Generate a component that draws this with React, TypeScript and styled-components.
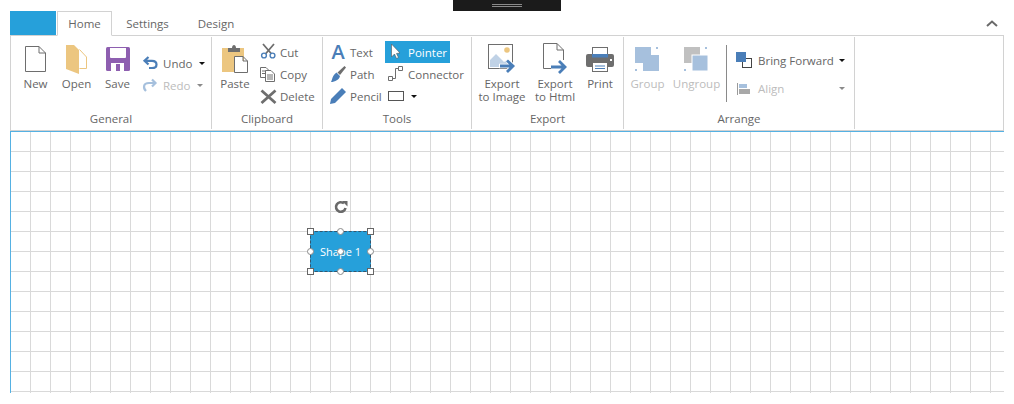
import React from "react";
import styled, { createGlobalStyle } from "styled-components";

const Global = createGlobalStyle`
  html, body { margin: 0; padding: 0; background: #fff; overflow: hidden; }
  body { font-family: "Open Sans", "Liberation Sans", sans-serif; font-size: 11.5px; color: #6b6b6b; }
`;

const Page = styled.div`
  position: relative;
  width: 1014px;
  height: 404px;
  padding: 11px 0 0 10px;
  box-sizing: border-box;
`;
const DragHandle = styled.div`
  position: absolute;
  left: 453px;
  top: 0;
  width: 108px;
  height: 11px;
  background: #1b1b1b;
  display: flex;
  justify-content: center;
  padding: 4px 0 0 0;
  box-sizing: border-box;
  &::before {
    content: "";
    width: 30px;
    height: 3px;
    border-top: 1px solid #8a8a8a;
    border-bottom: 1px solid #8a8a8a;
    box-sizing: border-box;
  }
`;
const TabRow = styled.div`
  height: 24px;
  width: 994px;
  display: flex;
  align-items: stretch;
  position: relative;
`;
const AppButton = styled.div`
  width: 46px;
  margin-right: 1px;
  background: #26a0da;
`;
const Tab = styled.div<{ $active?: boolean; $width: number }>`
  width: ${(p) => p.$width}px;
  box-sizing: border-box;
  margin-bottom: ${(p) => (p.$active ? "-1px" : "0")};
  background: #fff;
  display: flex;
  align-items: center;
  justify-content: center;
  font-size: 11.5px;
  color: #666;
  position: relative;
  z-index: 1;
  border: 1px solid ${(p) => (p.$active ? "#d2d2d2" : "transparent")};
  border-bottom: ${(p) => (p.$active ? "1px solid #fff" : "none")};
`;
const Collapse = styled.svg`
  margin-left: auto;
  margin-right: 6px;
  align-self: center;
`;
const Ribbon = styled.div`
  width: 994px;
  height: 96px;
  box-sizing: border-box;
  border: 1px solid #d2d2d2;
  display: flex;
  background: #fff;
`;
const Group = styled.section<{ $width: number }>`
  width: ${(p) => p.$width}px;
  box-sizing: border-box;
  margin: 1px 0;
  border-right: 1px solid #d2d2d2;
  display: flex;
  flex-direction: column;
  flex: none;
`;
const GroupBody = styled.div<{ $pad?: number }>`
  flex: 1;
  display: flex;
  align-items: flex-start;
  padding-left: ${(p) => p.$pad ?? 0}px;
`;
const GroupTitle = styled.div`
  height: 21px;
  line-height: 22px;
  text-align: center;
  color: #666;
`;
const LargeButton = styled.div<{ $width: number; $disabled?: boolean }>`
  width: ${(p) => p.$width}px;
  flex: none;
  padding-top: 7px;
  display: flex;
  flex-direction: column;
  align-items: center;
  color: ${(p) => (p.$disabled ? "#bcbcbc" : "#666")};
`;
const LargeIcon = styled.svg`
  display: block;
  overflow: visible;
`;
const LargeLabel = styled.div`
  margin-top: 3px;
  line-height: 13px;
  text-align: center;
  white-space: nowrap;
`;
const SmallColumn = styled.div<{ $top: number; $width?: number }>`
  padding-top: ${(p) => p.$top}px;
  width: ${(p) => (p.$width ? p.$width + "px" : "auto")};
  flex: none;
  display: flex;
  flex-direction: column;
`;
const SmallRow = styled.div<{ $h?: number; $indent: number; $active?: boolean; $disabled?: boolean; $width?: number }>`
  height: ${(p) => p.$h ?? 22}px;
  padding-left: ${(p) => p.$indent}px;
  width: ${(p) => (p.$width ? p.$width + "px" : "auto")};
  box-sizing: border-box;
  display: flex;
  align-items: center;
  gap: 4px;
  white-space: nowrap;
  background: ${(p) => (p.$active ? "#26a0da" : "transparent")};
  color: ${(p) => (p.$active ? "#fff" : p.$disabled ? "#bcbcbc" : "#666")};
`;
const IconSlot = styled.svg<{ $w?: number }>`
  width: ${(p) => p.$w ?? 16}px;
  height: 18px;
  flex: none;
  overflow: visible;
`;
const LetterIcon = styled.span`
  width: 16px;
  flex: none;
  text-align: center;
  font-size: 20px;
  font-weight: 600;
  line-height: 18px;
  color: #4a7eb8;
`;
const DropArrow = styled.span<{ $disabled?: boolean; $right?: number; $auto?: boolean }>`
  width: 0;
  height: 0;
  margin-left: ${(p) => (p.$auto ? "auto" : "3px")};
  margin-right: ${(p) => p.$right ?? 0}px;
  border-left: 3px solid transparent;
  border-right: 3px solid transparent;
  border-top: 3px solid ${(p) => (p.$disabled ? "#8a8a8a" : "#111")};
`;
const Divider = styled.div`
  width: 1px;
  height: 57px;
  margin: 8px 0 0 4px;
  background: #8a8a8a;
  flex: none;
`;
const Canvas = styled.div`
  position: relative;
  width: 994px;
  height: 262px;
  box-sizing: border-box;
  border-top: 1px solid #55b1e3;
  border-left: 1px solid #55b1e3;
  background-color: #fff;
  background-image: linear-gradient(to right, transparent 19px, #d9d9d9 19px),
    linear-gradient(to bottom, transparent 19px, #d9d9d9 19px);
  background-size: 20px 20px;
`;
const Shape = styled.div`
  position: absolute;
  left: 299px;
  top: 99px;
  width: 61px;
  height: 41px;
  box-sizing: border-box;
  background: #26a0da;
  border: 1px dashed #34566e;
  color: #fff;
  font-size: 11px;
  display: flex;
  align-items: center;
  justify-content: center;
`;
const Handle = styled.span<{ $x: number; $y: number }>`
  position: absolute;
  left: ${(p) => p.$x}px;
  top: ${(p) => p.$y}px;
  width: 7px;
  height: 7px;
  box-sizing: border-box;
  background: #fff;
  border: 1px solid #666;
`;
const Knob = styled(Handle)`
  border-radius: 50%;
  border-color: #8a8a8a;
`;
const RotateIcon = styled.svg`
  position: absolute;
  left: 323px;
  top: 68px;
`;

const BLUE = "#4a7eb8";
const LBLUE = "#a6c0dd";
const TAN = "#ecc680";
const GRAY = "#6e6e6e";

const box = (x: number, w: number) => ({ width: w, height: 30, viewBox: `${x} 44 ${w} 30` });
const slot = (x: number, cy: number, w = 16) => ({ $w: w, viewBox: `${x} ${cy - 9} ${w} 18` });

export default function App() {
  return (
    <Page>
      <Global />
      <DragHandle />
      <TabRow>
        <AppButton />
        <Tab $active $width={55}>Home</Tab>
        <Tab $width={71}>Settings</Tab>
        <Tab $width={66}>Design</Tab>
        <Collapse width="12" height="7" viewBox="0 0 12 7">
          <path d="M1 6 L6 1.5 L11 6" fill="none" stroke="#6a6a6a" strokeWidth="2" />
        </Collapse>
      </TabRow>
      <Ribbon>
        <Group $width={201}>
          <GroupBody $pad={4}>
            <LargeButton $width={41}>
              <LargeIcon {...box(24, 22)}>
                <path d="M24.5 46.5 H38 L44.5 53 V71.5 H24.5 Z M38 46.5 V53 H44.5" fill="#fff" stroke={GRAY} />
              </LargeIcon>
              <LargeLabel>New</LargeLabel>
            </LargeButton>
            <LargeButton $width={41}>
              <LargeIcon {...box(65, 22)}>
                <path d="M78.5 49.5 L85.5 57 V68.5 H78.5" fill="#fff" stroke={TAN} />
                <path d="M65 45 L73 45 L78 50 V74 L65 69 Z" fill={TAN} />
              </LargeIcon>
              <LargeLabel>Open</LargeLabel>
            </LargeButton>
            <LargeButton $width={41}>
              <LargeIcon {...box(105, 24)}>
                <rect x="105" y="47" width="24" height="24" rx="1.5" fill="#8e5fb0" />
                <path d="M109 48 H125 V57 Q125 58 124 58 H110 Q109 58 109 57 Z" fill="#fff" />
                <path d="M110 63 H123 V71 H110 Z" fill="#fff" />
                <path d="M115 64 H119 V71 H115 Z" fill="#8e5fb0" />
              </LargeIcon>
              <LargeLabel>Save</LargeLabel>
            </LargeButton>
            <SmallColumn $top={15}>
              <SmallRow $indent={5} $width={67}>
                <IconSlot {...slot(143, 63)}>
                  <path d="M148.5 57 L144.5 60.8 L148.5 64.5 M145 60.8 H152 C158 60.8 158 68 152 68 H149" fill="none" stroke={BLUE} strokeWidth="2.2" />
                </IconSlot>
                Undo
                <DropArrow $auto />
              </SmallRow>
              <SmallRow $indent={5} $width={67} $disabled>
                <IconSlot {...slot(143, 85)}>
                  <path d="M152 79.5 L155.5 83 L152 86.5 M155 83 H149 C143 83 143 88 146 91" fill="none" stroke={LBLUE} strokeWidth="2.2" />
                </IconSlot>
                Redo
                <DropArrow $auto $disabled $right={2} />
              </SmallRow>
            </SmallColumn>
          </GroupBody>
          <GroupTitle>General</GroupTitle>
        </Group>

        <Group $width={111}>
          <GroupBody>
            <LargeButton $width={46}>
              <LargeIcon {...box(222, 26)}>
                <path d="M222 48 H244 V72 H222 Z" fill={TAN} />
                <path d="M228 48 H232 C232 44 236 44 236 48 H240 V52 H228 Z" fill={GRAY} />
                <path d="M234.5 56.5 H243 L247.5 61 V72.5 H234.5 Z M243 56.5 V61 H247.5" fill="#fff" stroke={GRAY} />
              </LargeIcon>
              <LargeLabel>Paste</LargeLabel>
            </LargeButton>
            <SmallColumn $top={4}>
              <SmallRow $indent={2}>
                <IconSlot {...slot(260, 52)}>
                  <path d="M263 44 L272 54.5 M274 44 L265 54.5" stroke={GRAY} strokeWidth="1.8" fill="none" />
                  <circle cx="264" cy="55.5" r="2.4" fill="#fff" stroke={BLUE} strokeWidth="1.4" />
                  <circle cx="272.5" cy="55.5" r="2.4" fill="#fff" stroke={BLUE} strokeWidth="1.4" />
                </IconSlot>
                Cut
              </SmallRow>
              <SmallRow $indent={2}>
                <IconSlot {...slot(260, 74)}>
                  <path d="M260.5 67.5 H266 L268.5 70 V77.5 H260.5 Z M262 71 H266 M262 73.5 H266" fill="#fff" stroke={GRAY} />
                  <path d="M265.5 70.5 H271 L274.5 74 V81.5 H265.5 Z M267 75 H273 M267 77 H273 M267 79 H273" fill="#fff" stroke={GRAY} />
                </IconSlot>
                Copy
              </SmallRow>
              <SmallRow $indent={2}>
                <IconSlot {...slot(260, 96)}>
                  <path d="M261.5 90.5 L275.5 103 M275.5 90.5 L261.5 103" stroke={GRAY} strokeWidth="2.8" fill="none" />
                </IconSlot>
                Delete
              </SmallRow>
            </SmallColumn>
          </GroupBody>
          <GroupTitle>Clipboard</GroupTitle>
        </Group>

        <Group $width={149}>
          <GroupBody>
            <SmallColumn $top={4} $width={62}>
              <SmallRow $indent={7}>
                <LetterIcon>A</LetterIcon>
                Text
              </SmallRow>
              <SmallRow $indent={7}>
                <IconSlot {...slot(330, 74)}>
                  <path d="M344.5 66 L346 67.5 L340 75 L337.5 72.5 Z" fill={GRAY} />
                  <path d="M336.5 72.5 L340 76 C339.5 79.5 335 82 331 82 C332.5 79.5 332 75.5 336.5 72.5 Z" fill={BLUE} />
                </IconSlot>
                Path
              </SmallRow>
              <SmallRow $indent={7}>
                <IconSlot {...slot(330, 96)}>
                  <path d="M342 88 L346 92 L335 103 L330 104 L331 99 Z" fill={BLUE} />
                </IconSlot>
                Pencil
              </SmallRow>
            </SmallColumn>
            <SmallColumn $top={4}>
              <SmallRow $indent={3} $active $width={65}>
                <IconSlot {...slot(388, 52)}>
                  <path d="M391.5 44 V57 L394.5 54 L396.5 58.5 L398.5 57.5 L396.5 53.5 L400 53 Z" fill="#fff" stroke="#555" strokeWidth="0.6" />
                </IconSlot>
                Pointer
              </SmallRow>
              <SmallRow $indent={3}>
                <IconSlot {...slot(388, 74)}>
                  <path d="M388.5 76.5 H392.5 V80.5 H388.5 Z M398.5 66.5 H402.5 V70.5 H398.5 Z" fill="#fff" stroke={GRAY} />
                  <path d="M392.5 78.5 H395.5 V68.5 H398.5" fill="none" stroke={GRAY} />
                </IconSlot>
                Connector
              </SmallRow>
              <SmallRow $indent={3}>
                <IconSlot {...slot(388, 96)}>
                  <rect x="388.5" y="91.5" width="15" height="9" fill="#fff" stroke="#555" />
                </IconSlot>
                <DropArrow />
              </SmallRow>
            </SmallColumn>
          </GroupBody>
          <GroupTitle>Tools</GroupTitle>
        </Group>

        <Group $width={152}>
          <GroupBody>
            <LargeButton $width={60}>
              <LargeIcon {...box(489, 29)}>
                <rect x="489.5" y="44.5" width="24" height="24" fill="#fff" stroke={GRAY} />
                <circle cx="508" cy="50" r="2.8" fill={TAN} />
                <path d="M491 65 V60 L497 54 L505 62 L508 60 L511 63 V67 H491 Z" fill="#c0d2e6" />
                <path d="M500 66 H512 M508 60 L514 66 L508 72" fill="none" stroke="#fff" strokeWidth="4.5" />
                <path d="M501 66 H512 M508 60.5 L514 66 L508 72" fill="none" stroke={BLUE} strokeWidth="2.8" />
              </LargeIcon>
              <LargeLabel>Export<br />to Image</LargeLabel>
            </LargeButton>
            <LargeButton $width={46}>
              <LargeIcon {...box(543, 25)}>
                <path d="M551 68.5 H543.5 V43.5 H557 L563.5 50 V60 M557 43.5 V50 H563.5" fill="#fff" stroke={GRAY} />
                <path d="M551 67 H563 M559 61 L565 67 L559 73" fill="none" stroke={BLUE} strokeWidth="2.8" />
              </LargeIcon>
              <LargeLabel>Export<br />to Html</LargeLabel>
            </LargeButton>
            <LargeButton $width={44}>
              <LargeIcon {...box(586, 28)}>
                <rect x="592.5" y="47.5" width="15" height="9" fill="#fff" stroke={GRAY} />
                <path d="M588 54 H612 Q614 54 614 56 V65 Q614 67 612 67 H588 Q586 67 586 65 V56 Q586 54 588 54 Z" fill={GRAY} />
                <rect x="592" y="54" width="16" height="3.5" fill={BLUE} />
                <rect x="610" y="59" width="2" height="2" fill="#fff" />
                <rect x="592.5" y="62.5" width="15" height="9" fill="#fff" stroke={GRAY} />
                <path d="M595 66 H605 M595 68.5 H605" stroke={BLUE} />
              </LargeIcon>
              <LargeLabel>Print</LargeLabel>
            </LargeButton>
          </GroupBody>
          <GroupTitle>Export</GroupTitle>
        </Group>

        <Group $width={231}>
          <GroupBody>
            <LargeButton $width={47} $disabled>
              <LargeIcon {...box(635, 25)}>
                <path d="M635 47 H651 V55 H659 V71 H643 V63 H635 Z" fill={LBLUE} />
                <rect x="656" y="47" width="2" height="2" fill={LBLUE} />
                <rect x="635" y="69" width="2" height="2" fill={LBLUE} />
              </LargeIcon>
              <LargeLabel>Group</LargeLabel>
            </LargeButton>
            <LargeButton $width={51} $disabled>
              <LargeIcon {...box(685, 25)}>
                <rect x="685" y="47" width="16" height="16" fill="#c0c0c0" />
                <rect x="693" y="55" width="16" height="16" fill={LBLUE} stroke="#fff" />
                <rect x="706" y="47" width="2" height="2" fill={LBLUE} />
                <rect x="685" y="69" width="2" height="2" fill={LBLUE} />
              </LargeIcon>
              <LargeLabel>Ungroup</LargeLabel>
            </LargeButton>
            <Divider />
            <SmallColumn $top={9}>
              <SmallRow $indent={9} $h={28} $width={118}>
                <IconSlot {...slot(737, 60, 18)}>
                  <rect x="743.5" y="58.5" width="9" height="9" fill="#fff" stroke="#444" />
                  <rect x="737" y="52" width="10" height="10" fill={BLUE} />
                </IconSlot>
                Bring Forward
                <DropArrow $auto />
              </SmallRow>
              <SmallRow $indent={9} $h={29} $width={118} $disabled>
                <IconSlot {...slot(737, 88, 18)}>
                  <path d="M738.5 82 V94" stroke="#9a9a9a" />
                  <rect x="740" y="83" width="8" height="4" fill={LBLUE} />
                  <rect x="740" y="88" width="11" height="5" fill="#a8a8a8" />
                </IconSlot>
                Align
                <DropArrow $auto $disabled />
              </SmallRow>
            </SmallColumn>
          </GroupBody>
          <GroupTitle>Arrange</GroupTitle>
        </Group>
      </Ribbon>
      <Canvas>
        <RotateIcon width="14" height="14" viewBox="0 0 14 14">
          <path d="M11.5 8 A4.8 4.8 0 1 1 10 3.4" fill="none" stroke="#6a6a6a" strokeWidth="2.6" />
          <path d="M8 1 H13.5 V6.5 Z" fill="#6a6a6a" />
        </RotateIcon>
        <Shape>Shape 1</Shape>
        <Handle $x={296} $y={96} />
        <Handle $x={356} $y={96} />
        <Handle $x={296} $y={136} />
        <Handle $x={356} $y={136} />
        <Knob $x={326} $y={96} />
        <Knob $x={326} $y={136} />
        <Knob $x={296} $y={116} />
        <Knob $x={356} $y={116} />
        <Knob $x={326} $y={116} />
      </Canvas>
    </Page>
  );
}
